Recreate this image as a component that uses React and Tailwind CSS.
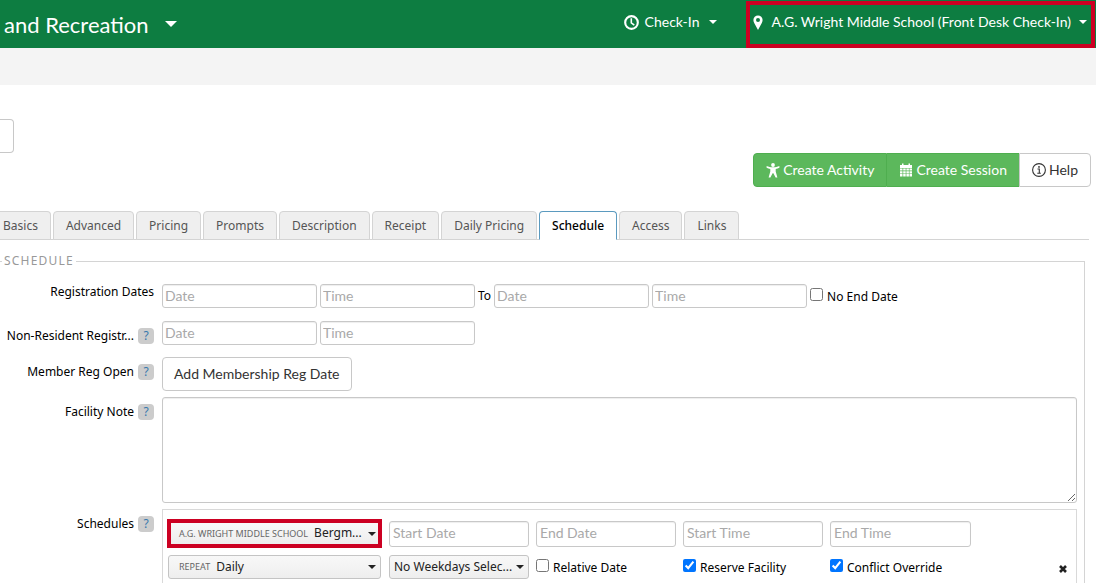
import React from "react";

const caretSvg = (cls) => (
  <svg viewBox="0 0 8 4" className={cls} fill="currentColor" aria-hidden="true">
    <path d="M0 0h8L4 4z" />
  </svg>
);

const ClockIcon = () => (
  <svg viewBox="0 0 14 14" className="size-[15px]" fill="none" stroke="currentColor" aria-hidden="true">
    <circle cx="7" cy="7" r="5.9" strokeWidth="2" />
    <path d="M6.8 3v4.4l2.8 2" strokeWidth="1.5" />
  </svg>
);

const PinIcon = () => (
  <svg viewBox="0 0 10 15" className="h-[15px] w-[10px]" fill="currentColor" aria-hidden="true">
    <path
      fillRule="evenodd"
      d="M5 .5A4.6 4.6 0 0 0 .4 5.1c0 1 .3 1.900.8 2.900L5 15l3.800-7c.5-1 .8-1.900.8-2.900A4.600 4.600 0 0 0 5 .5zm0 2.600a2 2 0 1 1 0 4 2 2 0 0 1 0-4z"
    />
  </svg>
);

const PersonIcon = () => (
  <svg viewBox="0 0 14 15" className="h-[15px] w-[14px]" fill="currentColor" aria-hidden="true">
    <circle cx="7" cy="2" r="1.900" />
    <path d="M.6 3c1.900.9 3.900 1.300 6.400 1.300S11.500 3.900 13.400 3v1.700c-1.200.6-2.500 1-3.700 1.200v2.700l1.700 6H9.600L7.400 10.200h-.8l-2.200 4.400H2.600l1.700-6V5.900C3.100 5.700 1.800 5.300.6 4.700z" />
  </svg>
);

const CalendarIcon = () => (
  <svg viewBox="0 0 14 14" className="size-[14px]" fill="currentColor" aria-hidden="true">
    <path d="M1 2h2V.5h1.500V2h5V.5H11V2h2v3H1z" />
    <path d="M1 5.500h2.500V7.500H1zM4.200 5.500h2.500V7.500H4.200zM7.400 5.500h2.500V7.500H7.400zM10.500 5.500H13V7.500h-2.500zM1 8.200h2.500v2.200H1zM4.200 8.200h2.500v2.200H4.200zM7.400 8.200h2.500v2.200H7.400zM10.500 8.200H13v2.200h-2.500zM1 11.100h2.500V13.500H1zM4.200 11.100h2.500V13.500H4.200zM7.400 11.100h2.500V13.500H7.400zM10.500 11.100H13V13.500h-2.500z" />
  </svg>
);

const InfoIcon = () => (
  <svg viewBox="0 0 14 14" className="size-[14px]" fill="none" stroke="currentColor" aria-hidden="true">
    <circle cx="7" cy="7" r="6.400" strokeWidth="1.100" />
    <path d="M5.500 6h1.800v4M5.300 10.200h3.500" strokeWidth="1.100" />
    <circle cx="7" cy="3.900" r=".9" fill="currentColor" stroke="none" />
  </svg>
);

const CrossIcon = () => (
  <svg viewBox="0 0 8 8" className="size-2" stroke="currentColor" strokeWidth="2.600" aria-hidden="true">
    <path d="M1 1l6 6M7 1L1 7" />
  </svg>
);

function Field({ label, tall }) {
  return (
    <input
      type="text"
      aria-label={label}
      placeholder={label.replace(/^.*: /, "")}
      className={
        "min-w-0 rounded-[3px] border border-[#c8c8c8] bg-white pb-[2px] font-[Lato,sans-serif] text-sm text-black shadow-[inset_0_1px_1px_rgba(0,0,0,0.07)] placeholder:text-[#a9a9a9] " +
        (tall ? "h-[26px] w-full px-[3px]" : "h-6 w-[155px] px-[2px]")
      }
    />
  );
}

function Picker({ id, prefix, value, flagged }) {
  return (
    <div
      className={
        "flex items-center bg-linear-to-b from-[#f8f8f8] to-[#eeeeee] " +
        (flagged
          ? "-ml-px h-[29px] border-4 border-[#cc0022] pr-[2px] pl-2"
          : "h-6 rounded-[3px] border border-[#c4c4c4] pr-1 " + (prefix ? "mr-px pl-[10px]" : "pl-1"))
      }
    >
      {prefix && (
        <label htmlFor={id} className="shrink-0 pr-[6px] text-[9px] text-[#666]">
          {prefix}
        </label>
      )}
      <select id={id} aria-label={prefix ? undefined : value} className="min-w-0 flex-1 appearance-none pb-px text-xs text-[#222] outline-none">
        <option>{value}</option>
      </select>
      {caretSvg("h-1 w-2 shrink-0 text-[#222]")}
    </div>
  );
}

function Check({ label, checked }) {
  return (
    <label className="flex items-center gap-[4px] pt-px text-xs whitespace-nowrap text-black">
      <input type="checkbox" defaultChecked={checked} className="mb-1 size-[13px] accent-[#0075ff]" />
      {label}
    </label>
  );
}

function Row({ label, help, labelPad, children }) {
  return (
    <div className="flex items-start gap-2">
      <div className={"flex w-[154px] shrink-0 items-center justify-end gap-1 text-xs text-black " + labelPad}>
        <span className="whitespace-nowrap">{label}</span>
        {help && (
          <button type="button" aria-label={"Help: " + label} className="h-4 w-4 shrink-0 rounded bg-[#cccccc] text-center text-xs leading-4 text-[#3878ad]">
            ?
          </button>
        )}
      </div>
      {children}
    </div>
  );
}

const tabs = ["Basics", "Advanced", "Pricing", "Prompts", "Description", "Receipt", "Daily Pricing", "Schedule", "Access", "Links"];

export default function App() {
  return (
    <div className="min-h-screen bg-white font-['Noto_Sans',sans-serif]">
      <header className="flex h-12 items-start justify-between bg-[#0d7d41] font-[Lato,sans-serif] text-white">
        <button type="button" className="flex h-12 items-center gap-4 pl-1 text-[22px]">
          and Recreation
          {caretSvg("h-[6px] w-3")}
        </button>
        <nav className="flex gap-[29px] pr-px text-sm">
          <button type="button" className="flex h-11 items-center gap-[6px]">
            <ClockIcon />
            Check-In
            {caretSvg("ml-1 h-1 w-2")}
          </button>
          <button type="button" className="mt-px flex h-[47px] items-center gap-[8px] border-4 border-[#cc0022] pr-1 pb-[5px] pl-[3px]">
            <PinIcon />
            A.G. Wright Middle School (Front Desk Check-In)
            {caretSvg("h-1 w-2")}
          </button>
        </nav>
      </header>
      <div className="h-[37px] bg-[#f4f4f4]" />

      <div className="pt-[34px]">
        <input type="text" aria-label="Search" className="block h-[34px] w-[14px] rounded-r border border-l-0 border-[#c8c8c8]" />
      </div>

      <div className="flex justify-end pr-[5px] font-[Lato,sans-serif] text-sm">
        <button type="button" className="flex h-[34px] items-center gap-[3px] rounded-l border border-[#4fae4f] bg-[#5cb85c] px-3 text-white">
          <PersonIcon />
          Create Activity
        </button>
        <button type="button" className="flex h-[34px] items-center gap-[3px] border-y border-[#4fae4f] bg-[#5cb85c] px-3 text-white">
          <CalendarIcon />
          Create Session
        </button>
        <button type="button" className="flex h-[34px] items-center gap-[3px] rounded-r border border-[#c8c8c8] bg-white px-3 text-[#333]">
          <InfoIcon />
          Help
        </button>
      </div>

      <nav role="tablist" className="mt-6 mr-[7px] flex gap-[2px] border-b border-[#d4d4d4] text-xs text-[#555]">
        {tabs.map((t, i) => (
          <button
            key={t}
            type="button"
            role="tab"
            aria-selected={t === "Schedule"}
            className={
              "-mb-px h-[29px] rounded-t border " +
              (t === "Schedule"
                ? "border-[#5b9abf] border-b-white bg-white px-3 font-medium text-black"
                : "border-[#d4d4d4] bg-[#efefef] " + (i === 0 ? "rounded-tl-none border-l-0 pr-3 pl-[3px]" : "px-3"))
            }
          >
            {t}
          </button>
        ))}
      </nav>

      <fieldset className="mt-3 mr-[11px] min-w-0 border border-b-0 border-l-0 border-[#d4d4d4]">
        <legend className="ml-[2px] px-[2px] text-xs leading-[18px] tracking-widest text-[#999]">SCHEDULE</legend>

        <Row label="Registration Dates" labelPad="pt-[14px]">
          <div className="flex items-center gap-[3px] pt-[14px] text-xs text-black">
            <Field label="Registration start: Date" />
            <Field label="Registration start: Time" />
            <span>To</span>
            <Field label="Registration end: Date" />
            <Field label="Registration end: Time" />
            <Check label="No End Date" />
          </div>
        </Row>
        <Row label="Non-Resident Registr..." help labelPad="pt-[20px]">
          <div className="flex gap-[3px] pt-[13px]">
            <Field label="Non-resident: Date" />
            <Field label="Non-resident: Time" />
          </div>
        </Row>
        <Row label="Member Reg Open" help labelPad="pt-[19px]">
          <button type="button" className="mt-3 h-[34px] rounded border border-[#c8c8c8] bg-white px-[11px] font-[Lato,sans-serif] text-sm text-[#333]">
            Add Membership Reg Date
          </button>
        </Row>
        <Row label="Facility Note" help labelPad="pt-[13px]">
          <textarea aria-label="Facility Note" className="mt-[6px] mr-[7px] block h-[106px] min-w-0 flex-1 resize rounded-[3px] border border-[#c8c8c8] p-1 text-xs shadow-[inset_0_1px_1px_rgba(0,0,0,0.07)]" />
        </Row>
        <Row label="Schedules" help labelPad="pt-[13px]">
          <div className="mt-[6px] mr-[7px] flex min-w-0 flex-1 items-end justify-between border border-b-0 border-[#d9d9d9] pt-[9px] pr-[9px] pb-1 pl-[5px]">
            <div className="grid grid-cols-[214px_140px_140px_140px_141px] items-center gap-x-[7px] gap-y-[7px]">
              <Picker id="facility" prefix="A.G. WRIGHT MIDDLE SCHOOL" value="Bergm..." flagged />
              <Field label="Start Date" tall />
              <Field label="End Date" tall />
              <Field label="Start Time" tall />
              <Field label="End Time" tall />
              <Picker id="repeat" prefix="REPEAT" value="Daily" />
              <Picker id="weekdays" value="No Weekdays Selec..." />
              <Check label="Relative Date" />
              <Check label="Reserve Facility" checked />
              <Check label="Conflict Override" checked />
            </div>
            <button type="button" aria-label="Remove schedule" className="pb-[6px] text-[#222]">
              <CrossIcon />
            </button>
          </div>
        </Row>
      </fieldset>
    </div>
  );
}
